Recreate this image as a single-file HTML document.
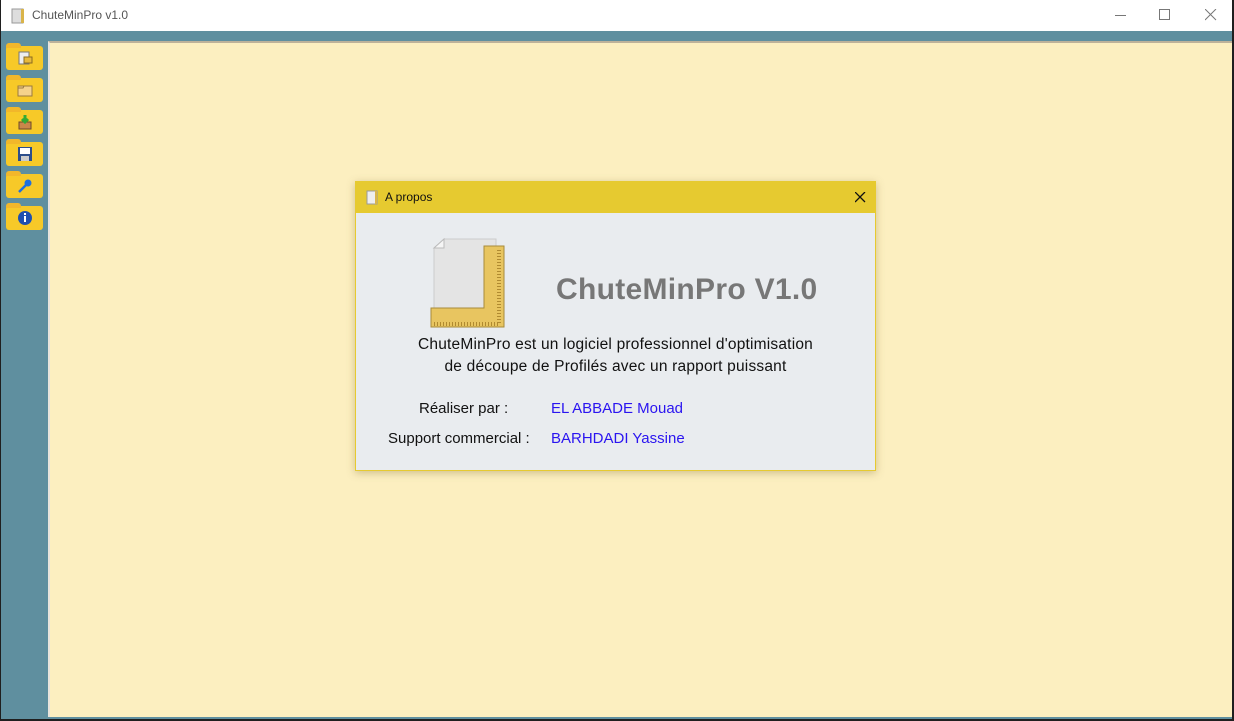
<!DOCTYPE html>
<html><head><meta charset="utf-8"><style>
*{margin:0;padding:0;box-sizing:border-box}
body{width:1234px;height:721px;background:#1f1f1f;position:relative;overflow:hidden;font-family:"Liberation Sans",sans-serif}
.win{position:absolute;left:1px;top:0;width:1231px;height:719px;background:#5f8f9f}
.title{position:absolute;left:0;top:0;width:1231px;height:31px;background:#fff}
.title .t{position:absolute;left:31px;top:8px;font-size:12px;color:#555}
.content{position:absolute;left:47px;top:41px;width:1184px;height:676px;background:#fcefc0;border-top:2px solid #bdb29a;border-left:2px solid #e8e4dc}
.btn{position:absolute;left:5px;width:37px;height:24px;background:#f7c928;border-radius:3px}
.btn:before{content:"";position:absolute;left:0;top:-3px;width:15px;height:5px;background:#f2b72a;border-radius:3px 3px 0 0}
.btn svg{position:absolute;left:11px;top:4px}
.dlg{position:absolute;left:355px;top:181px;width:521px;height:290px;background:#e9ecef;border:1px solid #e6ca30;box-shadow:0 2px 8px rgba(120,100,40,.35)}
.dh{height:31px;background:#e6ca30;position:relative}
.dh span{position:absolute;left:29px;top:8px;font-size:12px;color:#111}
.txt{position:absolute;font-size:15px;color:#111;white-space:nowrap}
.blue{color:#2a14f0}
</style></head><body>
<div class="win">
<div class="title">
<svg style="position:absolute;left:10px;top:8px" width="14" height="16"><rect x="1" y="1" width="11" height="14" fill="#ddd" stroke="#999"/><rect x="10" y="1" width="3" height="14" fill="#d9b44a"/></svg>
<div class="t">ChuteMinPro v1.0</div>
<div style="position:absolute;left:1114px;top:15px;width:11px;height:1px;background:#777"></div>
<div style="position:absolute;left:1158px;top:9px;width:11px;height:11px;border:1px solid #777"></div>
<svg style="position:absolute;left:1204px;top:9px" width="12" height="12"><path d="M0 0L11 11M11 0L0 11" stroke="#777" stroke-width="1"/></svg>
</div>
<div class="content"></div>
<div class="btn" style="top:46px"><svg width="16" height="16"><rect x="2" y="2" width="10" height="12" fill="#eee" stroke="#777"/><rect x="7" y="7" width="8" height="6" fill="#e8b93a" stroke="#8a6a20"/></svg></div>
<div class="btn" style="top:78px"><svg width="16" height="16"><rect x="1" y="4" width="14" height="10" fill="#f5d28a" stroke="#9a7a40"/><path d="M1 6h5l1-2h8" stroke="#9a7a40" fill="none"/></svg></div>
<div class="btn" style="top:110px"><svg width="16" height="16"><rect x="2" y="8" width="12" height="7" fill="#c9874a" stroke="#6a4a2a"/><path d="M8 1v7M5 5l3 3 3-3" stroke="#3a3" stroke-width="3" fill="none"/></svg></div>
<div class="btn" style="top:142px"><svg width="16" height="16"><rect x="1" y="1" width="14" height="14" fill="#2c4e8c"/><rect x="3" y="2" width="10" height="6" fill="#fff"/><rect x="4" y="10" width="8" height="5" fill="#ccc"/></svg></div>
<div class="btn" style="top:174px"><svg width="16" height="16"><circle cx="11" cy="5" r="3.5" fill="#1e6fe0"/><path d="M9 7L2 14" stroke="#1e6fe0" stroke-width="2.5"/></svg></div>
<div class="btn" style="top:206px"><svg width="16" height="16"><circle cx="8" cy="8" r="7" fill="#1f4fb0"/><rect x="7" y="6" width="2" height="6" fill="#fff"/><rect x="7" y="3" width="2" height="2" fill="#fff"/></svg></div>
</div>
<div class="dlg">
<div class="dh"><svg style="position:absolute;left:10px;top:8px" width="12" height="15"><rect x="1" y="1" width="10" height="13" fill="#eee" stroke="#999"/><rect x="9" y="1" width="2" height="13" fill="#d9b44a"/></svg><span>A propos</span>
<svg style="position:absolute;left:499px;top:10px" width="11" height="11"><path d="M0 0L10 10M10 0L0 10" stroke="#111" stroke-width="1.3"/></svg></div>
<svg style="position:absolute;left:70px;top:56px" width="82" height="90">
<path d="M8 10 L18 1 H70 V80 H8 Z" fill="#e4e4e4" stroke="#ccc"/>
<path d="M8 10 L18 1 V10 Z" fill="#f5f5f5" stroke="#bbb"/>
<path d="M58 8 H78 V89 H5 V70 H58 Z" fill="#e8c560" stroke="#a88a3a"/>
<path d="M73 12 V86 H8" stroke="#b08a30" stroke-dasharray="1 2" stroke-width="4" fill="none"/>
</svg>
<div class="txt" style="left:200px;top:91px;font-size:30px;font-weight:bold;color:#777;letter-spacing:0.3px">ChuteMinPro V1.0</div>
<div class="txt" style="left:0;width:519px;text-align:center;top:152px;line-height:22px;font-size:15.5px;letter-spacing:0.2px">ChuteMinPro est un logiciel professionnel d'optimisation<br>de découpe de Profilés avec un rapport puissant</div>
<div class="txt" style="left:63px;top:218px">Réaliser par :</div>
<div class="txt blue" style="left:195px;top:218px">EL ABBADE Mouad</div>
<div class="txt" style="left:32px;top:248px">Support commercial :</div>
<div class="txt blue" style="left:195px;top:248px">BARHDADI Yassine</div>
</div>
</body></html>
